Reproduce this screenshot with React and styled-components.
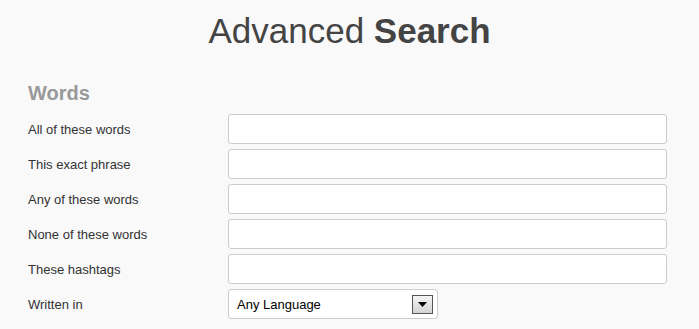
import React from "react";
import styled, { createGlobalStyle } from "styled-components";

const GlobalStyle = createGlobalStyle`
  html, body {
    margin: 0;
    padding: 0;
    background: #f9f9f9;
    font-family: "Liberation Sans", Arial, sans-serif;
  }
`;

const fields = [
  "All of these words",
  "This exact phrase",
  "Any of these words",
  "None of these words",
  "These hashtags",
];

function App() {
  return (
    <>
      <GlobalStyle />
      <Page>
        <Title>
          Advanced <strong>Search</strong>
        </Title>
        <Section>
          <SectionTitle>Words</SectionTitle>
          {fields.map((label) => (
            <Row key={label}>
              <Label>{label}</Label>
              <TextInput type="text" />
            </Row>
          ))}
          <Row>
            <Label>Written in</Label>
            <Select>
              <SelectText>Any Language</SelectText>
              <ArrowButton>
                <svg width="9" height="5" viewBox="0 0 9 5">
                  <path d="M0 0h9L4.5 5z" fill="#000" />
                </svg>
              </ArrowButton>
            </Select>
          </Row>
        </Section>
      </Page>
    </>
  );
}

export default App;

// Styled Components
const Page = styled.div`
  width: 699px;
  height: 329px;
  overflow: hidden;
  color: #333;
`;

const Title = styled.h1`
  margin: 0;
  padding-top: 10px;
  height: 55px;
  text-align: center;
  font-size: 35px;
  font-weight: 400;
  line-height: 42px;
  color: #444;

  strong {
    font-weight: 700;
  }
`;

const Section = styled.div`
  padding: 0 32px 0 28px;
`;

const SectionTitle = styled.h2`
  margin: 0;
  padding-top: 17px;
  height: 24px;
  font-size: 20px;
  line-height: 22px;
  font-weight: 700;
  color: #999;
  margin-bottom: 8px;
`;

const Row = styled.div`
  display: flex;
  align-items: center;
  height: 30px;
  margin-bottom: 5px;
`;

const Label = styled.label`
  width: 200px;
  font-size: 13px;
  color: #333;
`;

const TextInput = styled.input`
  box-sizing: border-box;
  width: 440px;
  height: 30px;
  border: 1px solid #ccc;
  border-radius: 3px;
  background: #fff;
  outline: none;
`;

const Select = styled.div`
  box-sizing: border-box;
  width: 210px;
  height: 30px;
  border: 1px solid #ccc;
  border-radius: 3px;
  background: #fff;
  display: flex;
  align-items: center;
  justify-content: space-between;
  padding: 0 4px 0 8px;
`;

const SelectText = styled.span`
  font-size: 13px;
  color: #000;
`;

const ArrowButton = styled.span`
  box-sizing: border-box;
  width: 21px;
  height: 19px;
  border: 1px solid #555;
  background: linear-gradient(#f4f4f4, #d4d4d4);
  display: flex;
  align-items: center;
  justify-content: center;
`;
